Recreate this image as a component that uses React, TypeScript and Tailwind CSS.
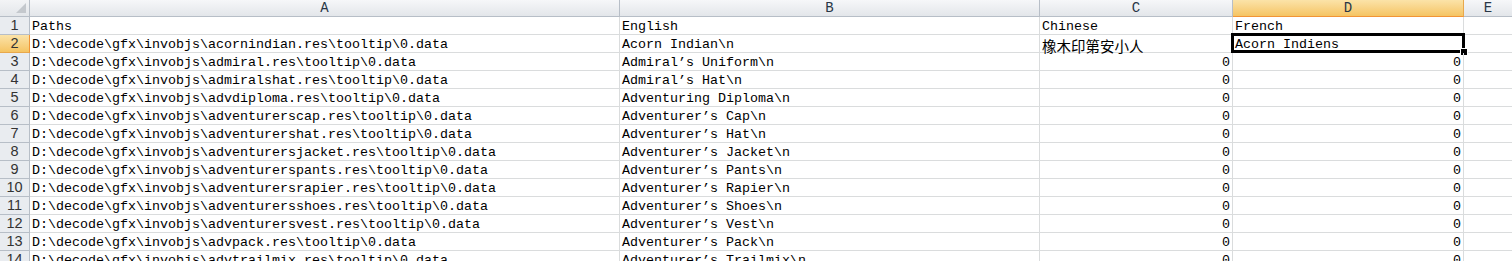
import React from 'react';

type Row = { path: string; en: string; zh: string; fr: string; num?: boolean };

const BASE = 'D:\\decode\\gfx\\invobjs\\';
const TAIL = '\\tooltip\\0.data';

const rows: Row[] = [
  { path: 'Paths', en: 'English', zh: 'Chinese', fr: 'French' },
  { path: BASE + 'acornindian.res' + TAIL, en: 'Acorn Indian\\n', zh: '橡木印第安小人', fr: 'Acorn Indiens' },
  { path: BASE + 'admiral.res' + TAIL, en: 'Admiral’s Uniform\\n', zh: '0', fr: '0', num: true },
  { path: BASE + 'admiralshat.res' + TAIL, en: 'Admiral’s Hat\\n', zh: '0', fr: '0', num: true },
  { path: BASE + 'advdiploma.res' + TAIL, en: 'Adventuring Diploma\\n', zh: '0', fr: '0', num: true },
  { path: BASE + 'adventurerscap.res' + TAIL, en: 'Adventurer’s Cap\\n', zh: '0', fr: '0', num: true },
  { path: BASE + 'adventurershat.res' + TAIL, en: 'Adventurer’s Hat\\n', zh: '0', fr: '0', num: true },
  { path: BASE + 'adventurersjacket.res' + TAIL, en: 'Adventurer’s Jacket\\n', zh: '0', fr: '0', num: true },
  { path: BASE + 'adventurerspants.res' + TAIL, en: 'Adventurer’s Pants\\n', zh: '0', fr: '0', num: true },
  { path: BASE + 'adventurersrapier.res' + TAIL, en: 'Adventurer’s Rapier\\n', zh: '0', fr: '0', num: true },
  { path: BASE + 'adventurersshoes.res' + TAIL, en: 'Adventurer’s Shoes\\n', zh: '0', fr: '0', num: true },
  { path: BASE + 'adventurersvest.res' + TAIL, en: 'Adventurer’s Vest\\n', zh: '0', fr: '0', num: true },
  { path: BASE + 'advpack.res' + TAIL, en: 'Adventurer’s Pack\\n', zh: '0', fr: '0', num: true },
  { path: BASE + 'advtrailmix.res' + TAIL, en: 'Adventurer’s Trailmix\\n', zh: '0', fr: '0', num: true },
];

const cell = 'h-[18px] shrink-0 border-r border-b border-[#dadcdd] px-[2px] pt-[3px] leading-[14px] flex items-start whitespace-nowrap';
const colHead =
  'h-[17px] shrink-0 border-r border-b border-[#b7bec7] bg-gradient-to-b from-[#f6f7f9] to-[#e3e6ea] flex items-center justify-center text-[14px] text-[#283646]';

const App: React.FC = () => {
  return (
    <div className="w-[1512px] h-[261px] overflow-hidden bg-white font-['Liberation_Mono','Noto_Sans_CJK_SC',monospace] text-[13.33px] text-black">
      {/* column headers */}
      <div className="flex">
        <div className="relative h-[17px] w-[30px] shrink-0 border-r border-b border-[#b7bec7] bg-gradient-to-b from-[#f3f4f6] to-[#e3e6ea]">
          <svg className="absolute right-[3px] bottom-[3px]" width="10" height="10" viewBox="0 0 10 10">
            <polygon points="10,0 10,10 0,10" fill="#c4c8cd" />
          </svg>
        </div>
        <div className={`${colHead} w-[590px]`}>A</div>
        <div className={`${colHead} w-[420px]`}>B</div>
        <div className={`${colHead} w-[193px]`}>C</div>
        <div className="h-[17px] w-[231px] shrink-0 border-r border-b border-[#f29436] border-r-[#e8a84c] bg-gradient-to-b from-[#fbe3a8] to-[#f5c462] flex items-center justify-center text-[14px] text-[#283646]">
          D
        </div>
        <div className={`${colHead} flex-1 border-r-0`}>E</div>
      </div>

      {rows.map((r, i) => {
        const n = i + 1;
        const active = n === 2;
        const cjk = /[\u4e00-\u9fff]/.test(r.zh);
        return (
          <div key={n} className="flex">
            <div
              className={`h-[18px] w-[30px] shrink-0 border-r border-b flex items-center justify-center font-['Liberation_Sans',sans-serif] text-[14.5px] text-[#333] ${
                active
                  ? 'bg-gradient-to-b from-[#fbe3a8] to-[#f5c462] border-b-[#e8a84c] border-r-[#f29436]'
                  : 'bg-[#e9ecf0] border-[#b7bec7]'
              }`}
            >
              {n}
            </div>
            <div className={`${cell} w-[590px] overflow-hidden`}>{r.path}</div>
            <div className={`${cell} w-[420px] overflow-hidden`}>{r.en}</div>
            <div
              className={`${cell} w-[193px] ${r.num ? 'justify-end' : ''} ${
                cjk ? "pt-[1px] font-['Noto_Sans_CJK_SC',sans-serif] text-[14.5px] leading-[15px]" : ''
              }`}
            >
              {r.zh}
            </div>
            <div className={`${cell} relative w-[231px] ${r.num ? 'justify-end' : ''}`}>
              {r.fr}
              {active && (
                <div className="pointer-events-none absolute -left-[2px] -top-[2px] -right-[2px] -bottom-[1px] border-[3px] border-black">
                  <div className="absolute -right-[5px] -bottom-[5px] h-[6px] w-[6px] bg-black outline outline-1 outline-white" />
                </div>
              )}
            </div>
            <div className={`${cell} flex-1 border-r-0`} />
          </div>
        );
      })}
    </div>
  );
};

export default App;
